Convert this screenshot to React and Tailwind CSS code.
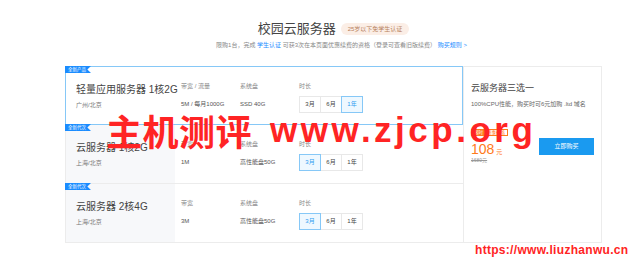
import React from 'react';

const rows = [
  { tag: '全新产品', name: '轻量应用服务器 1核2G', area: '广州/北京', bwLabel: '带宽 / 流量', bw: '5M / 每月1000G', disk: 'SSD 40G', active: 2, selected: true },
  { tag: '全新代次', name: '云服务器 1核2G', area: '上海/北京', bwLabel: '带宽', bw: '1M', disk: '高性能盘50G', active: 0 },
  { tag: '全新代次', name: '云服务器 2核4G', area: '上海/北京', bwLabel: '带宽', bw: '3M', disk: '高性能盘50G', active: 0 },
];

const durations = ['3月', '6月', '1年'];

function Row({ row }) {
  return (
    <div
      className={
        'relative h-[59px] flex ' +
        (row.selected ? 'border border-[#86c8f7] bg-white' : 'border-l border-b border-[#ececec]')
      }
    >
      {/* 角标 */}
      <span className="absolute -top-px -left-px h-[7px] pl-[3px] pr-[5px] bg-[#1a8cff] text-white text-[4.5px] leading-[7px] [clip-path:polygon(0_0,100%_0,86%_50%,100%_100%,0_100%)]">
        {row.tag}
      </span>

      <div className={'w-[109px] shrink-0 pl-[10px] pt-[17px] ' + (row.selected ? 'bg-white' : 'bg-[#f7f8fa]')}>
        <div className="text-[10px] leading-[12px] text-[#444] whitespace-nowrap">{row.name}</div>
        <div className="mt-[5px] text-[6px] leading-[8px] text-[#777]">{row.area}</div>
      </div>

      <div className="w-[59px] ml-[6px] pt-[15px]">
        <div className="text-[6px] leading-[8px] text-[#888]">{row.bwLabel}</div>
        <div className="mt-[10px] text-[6px] leading-[8px] text-[#555] whitespace-nowrap">{row.bw}</div>
      </div>

      <div className="w-[59px] pt-[15px]">
        <div className="text-[6px] leading-[8px] text-[#888]">系统盘</div>
        <div className="mt-[10px] text-[6px] leading-[8px] text-[#555] whitespace-nowrap">{row.disk}</div>
      </div>

      <div className="pt-[15px]">
        <div className="text-[6px] leading-[8px] text-[#888]">时长</div>
        <div className="mt-[6px] flex">
          {durations.map((d, i) => (
            <span
              key={d}
              className={
                'relative w-[22px] h-[17px] flex items-center justify-center text-[6px] border ' +
                (i > 0 ? '-ml-px ' : '') +
                (i === row.active
                  ? 'z-10 border-[#86c8f7] bg-[#eef8ff] text-[#2f9cf0]'
                  : 'border-[#e8e8e8] bg-white text-[#444]')
              }
            >
              {d}
            </span>
          ))}
        </div>
      </div>
    </div>
  );
}

export default function App() {
  return (
    <div className="relative w-[640px] h-[268px] bg-white overflow-hidden font-['Liberation_Sans','Noto_Sans_CJK_SC',sans-serif]">
      <div className="ml-[65px] w-[537px]">
        {/* 标题 */}
        <div className="mt-[22px] h-[14px] flex items-center justify-center gap-[5px]">
          <h1 className="text-[13px] leading-[14px] text-[#444]">校园云服务器</h1>
          <span className="h-[12px] px-[7px] rounded-full bg-[#fbeee6] text-[6px] leading-[12px] text-[#b7805c]">
            25岁以下免学生认证
          </span>
        </div>
        <p className="mt-[5px] pl-[16px] text-center text-[6px] leading-[8px] text-[#888] whitespace-nowrap">
          限购1台，完成 <span className="text-[#1a8cff]">学生认证</span> 可获3次在本页面优惠续费的资格（登录可查看旧版续费）{' '}
          <span className="text-[#1a8cff]">购买规则 &gt;</span>
        </p>

        <div className="mt-[17px] flex">
          <div className="w-[398px]">
            {rows.map((r) => (
              <Row key={r.name} row={r} />
            ))}
          </div>

          {/* 右侧 */}
          <div className="w-[139px] h-[177px] border border-[#ececec] pl-[7px] pr-[7px] pt-[16px]">
            <div className="text-[9px] leading-[10px] text-[#444]">云服务器三选一</div>
            <div className="mt-[7px] text-[6px] leading-[8px] text-[#666] whitespace-nowrap">100%CPU性能，购买时可6元加购 .ltd 域名</div>
            <div className="mt-[21px] flex justify-between items-start">
              <div>
                <div className="h-[7px] flex border border-[#ff7a1a] text-[4.5px] leading-[5px]">
                  <span className="px-[2px] bg-[#ff7a1a] text-white">限时</span>
                  <span className="px-[2px] text-[#ff7a1a]">特惠价格</span>
                </div>
                <div className="mt-[6px] h-[14px] flex items-end text-[#ff7a1a]">
                  <span className="text-[14px] leading-[14px]">108</span>
                  <span className="ml-[2px] text-[6px] leading-[8px]">元</span>
                </div>
                <div className="mt-[1px] text-[5px] leading-[7px] text-[#999] line-through">1680元</div>
              </div>
              <button className="mt-[9px] w-[55px] h-[17px] bg-[#1a9af0] text-white text-[6px]">立即购买</button>
            </div>
          </div>
        </div>
      </div>

      {/* 水印 */}
      <div className="absolute left-[106px] top-[110px] flex items-center text-[#ff2424] font-bold whitespace-nowrap pointer-events-none">
        <span className="text-[36px] leading-[40px] tracking-[0.5px] font-['Noto_Sans_CJK_SC',sans-serif]">主机测评</span>
        <span className="ml-[18px] text-[35px] leading-[40px] tracking-[3.5px] font-['Liberation_Sans',sans-serif]">www.zjcp.org</span>
      </div>
      <div className="absolute left-[475px] top-[243px] text-[12px] leading-[14px] font-bold tracking-[0.3px] text-[#ff2424] font-['Liberation_Sans',sans-serif] pointer-events-none">
        https://www.liuzhanwu.cn
      </div>
    </div>
  );
}
